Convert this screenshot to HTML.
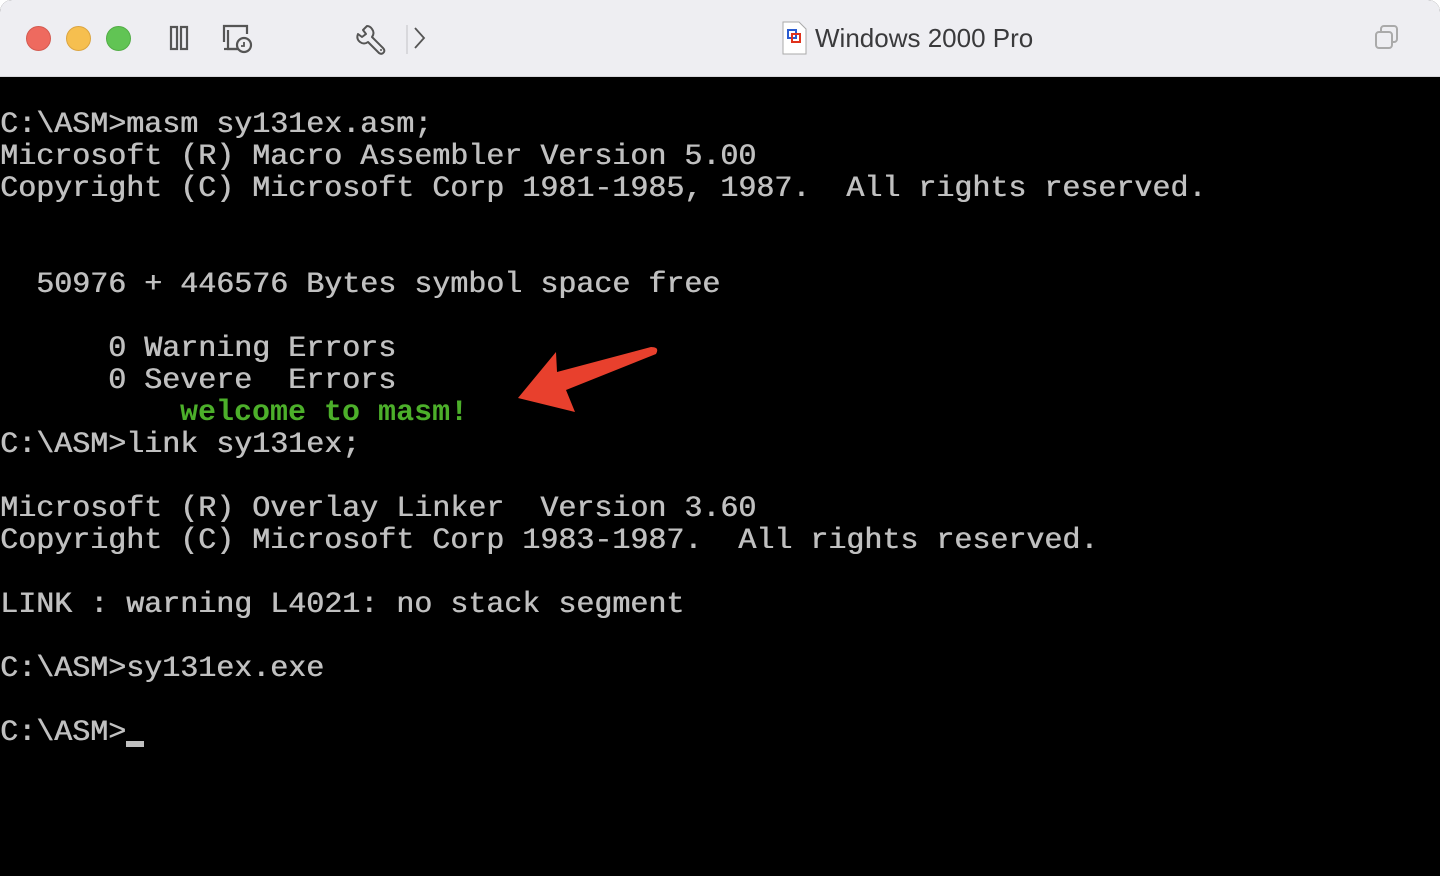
<!DOCTYPE html>
<html><head><meta charset="utf-8"><style>
html,body{margin:0;padding:0;background:#fff;width:1440px;height:876px;overflow:hidden}
.win{position:absolute;left:0;top:0;width:1440px;height:876px;border-radius:12px 12px 0 0;overflow:hidden;background:#000}
.bar{position:absolute;left:0;top:0;width:1440px;height:76px;background:#eeeef2;border-bottom:1px solid #d8d8dc}
.dot{position:absolute;top:26px;width:24px;height:24px;border-radius:50%}
.title{position:absolute;left:815px;top:23px;font:26px "Liberation Sans",sans-serif;color:#3a3a3c}
.term{position:absolute;left:0;top:0;font-family:"Liberation Mono",monospace;font-size:30px;line-height:32px;color:#c0c0c0;white-space:pre;text-shadow:0.6px 0 0 #c0c0c0}
.term div{position:absolute;left:0}
.g{color:#4caf2a;font-weight:bold;text-shadow:none}
</style></head><body>
<div class="win">
<div class="bar">
 <div class="dot" style="left:26px;background:#ee6a5f;border:1px solid #d45a50;width:23px;height:23px"></div>
 <div class="dot" style="left:66px;background:#f6bf4f;border:1px solid #dca540;width:23px;height:23px"></div>
 <div class="dot" style="left:106px;background:#61c454;border:1px solid #52ad46;width:23px;height:23px"></div>
 <svg style="position:absolute;left:160px;top:20px" width="110" height="40" viewBox="0 0 110 40">
  <rect x="11" y="7" width="6" height="22" fill="none" stroke="#555" stroke-width="2.2"/>
  <rect x="21" y="7" width="6" height="22" fill="none" stroke="#555" stroke-width="2.2"/>
  <path d="M64 22V6H87V14M68 10V29H78" fill="none" stroke="#555" stroke-width="2.2"/>
  <path d="M64 29H78" fill="none" stroke="#555" stroke-width="2.2"/>
  <circle cx="84" cy="25" r="7" fill="#eeeef2" stroke="#555" stroke-width="2.2"/>
  <path d="M84 22V26H81" fill="none" stroke="#555" stroke-width="1.8"/>
 </svg>
 <svg style="position:absolute;left:350px;top:20px" width="90" height="40" viewBox="0 0 90 40">
  <path d="M17 6 L13 10 L16 14 L12 17 L8 14 Q6 19 10 22 Q14 25 18 22 L29 33 Q32 35 34 32 Q35 30 33 28 L22 17 Q25 13 22 9 Q20 6 17 6 Z" fill="none" stroke="#555" stroke-width="2" stroke-linejoin="round"/>
  <circle cx="31" cy="30" r="1" fill="#555"/>
  <path d="M57 5V34" stroke="#d0d0d4" stroke-width="1.5"/>
  <path d="M65 8l9 10-9 10" fill="none" stroke="#555" stroke-width="1.8"/>
 </svg>
 <svg style="position:absolute;left:780px;top:20px" width="30" height="36" viewBox="0 0 30 36">
  <path d="M3 2H19L26 9V34H3Z" fill="#fff" stroke="#aaa" stroke-width="1"/>
  <rect x="8" y="10" width="8" height="8" fill="none" stroke="#2a5bd0" stroke-width="2"/>
  <rect x="12" y="14" width="8" height="8" fill="none" stroke="#e0321c" stroke-width="2"/>
 </svg>
 <div class="title">Windows 2000 Pro</div>
 <svg style="position:absolute;left:1372px;top:24px" width="32" height="30" viewBox="0 0 32 30">
  <rect x="4" y="8" width="16" height="16" rx="3" fill="none" stroke="#aaa" stroke-width="2"/>
  <path d="M9 8V5a3 3 0 0 1 3-3h10a3 3 0 0 1 3 3v10a3 3 0 0 1-3 3h-2" fill="none" stroke="#aaa" stroke-width="2"/>
 </svg>
</div>
<div class="term">
<div style="top:109px">C:\ASM&gt;masm sy131ex.asm;</div>
<div style="top:141px">Microsoft (R) Macro Assembler Version 5.00</div>
<div style="top:173px">Copyright (C) Microsoft Corp 1981-1985, 1987.  All rights reserved.</div>
<div style="top:269px">  50976 + 446576 Bytes symbol space free</div>
<div style="top:333px">      0 Warning Errors</div>
<div style="top:365px">      0 Severe  Errors</div>
<div style="top:397px" class="g">          welcome to masm!</div>
<div style="top:429px">C:\ASM&gt;link sy131ex;</div>
<div style="top:493px">Microsoft (R) Overlay Linker  Version 3.60</div>
<div style="top:525px">Copyright (C) Microsoft Corp 1983-1987.  All rights reserved.</div>
<div style="top:589px">LINK : warning L4021: no stack segment</div>
<div style="top:653px">C:\ASM&gt;sy131ex.exe</div>
<div style="top:717px">C:\ASM&gt;</div>
</div>
<div style="position:absolute;left:126px;top:741px;width:18px;height:6px;background:#c0c0c0"></div>
<svg style="position:absolute;left:0;top:0" width="1440" height="876">
 <path d="M518 398L556 352L557 372L651 347Q660 347 656 354L566 390L575 412Z" fill="#e8402d"/>
</svg>
</div>
</body></html>
